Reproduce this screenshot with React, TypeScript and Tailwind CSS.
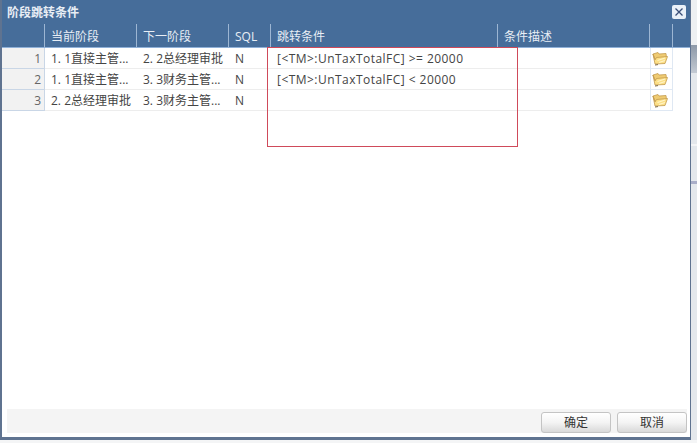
const cols = [
  { label: '当前阶段', w: 'w-[92px]' },
  { label: '下一阶段', w: 'w-[92px]' },
  { label: 'SQL', w: 'w-[42px]' },
  { label: '跳转条件', w: 'w-[227px]' },
  { label: '条件描述', w: 'w-[152px]' },
];

const rows = [
  { no: 1, from: '1. 1直接主管...', to: '2. 2总经理审批', sql: 'N', cond: '[<TM>:UnTaxTotalFC] >= 20000' },
  { no: 2, from: '1. 1直接主管...', to: '3. 3财务主管...', sql: 'N', cond: '[<TM>:UnTaxTotalFC] < 20000' },
  { no: 3, from: '2. 2总经理审批', to: '3. 3财务主管...', sql: 'N', cond: '' },
];

function FolderIcon() {
  return (
    <svg width="16" height="15" viewBox="0 0 16 15" className="block">
      <path d="M1 3 L6 1.5 L7 3 L14 2.5 L14.5 7 L3 8 Z" fill="#efcb72" stroke="#c39a4e" strokeWidth="0.8" />
      <path d="M1 3 L3 13 L13 12.5 L15.5 5.5 L4.5 6.5 L3 9 Z" fill="#fcdf86" stroke="#c39a4e" strokeWidth="0.8" />
      <path d="M5.5 9.5 L13 7 M7 11.5 L13 9.5" stroke="#fff4c8" strokeWidth="1.3" />
      <path d="M3 14 L6 13.6" stroke="#7d6a45" strokeWidth="1" />
    </svg>
  );
}

const btn =
  'h-[21px] w-[70px] rounded-[3px] border border-[#c4c4c4] bg-gradient-to-b from-white via-[#f4f4f4] to-[#d9d9d9] text-[12px] text-[#333]';

export default function App() {
  return (
    <div className="relative flex h-[443px] w-[697px] overflow-hidden bg-[#f4f5f6] font-['Open_Sans','Noto_Sans_CJK_SC',sans-serif] text-[12px] text-[#444]">
      <div className="flex h-[440px] w-[691px] shrink-0 flex-col border-b-[3px] border-l-2 border-r border-[#5f7390] bg-white">
        <div className="flex h-[24px] shrink-0 items-center justify-between bg-[#466d9a] pl-[5px] pr-[4px]">
          <span className="pt-[1px] text-[12px] font-bold text-[#e8eef5]">阶段跳转条件</span>
          <span className="flex h-[14px] w-[14px] items-center justify-center rounded-[2px] bg-[#e9f0f8]">
            <svg width="10" height="10" viewBox="0 0 10 10">
              <path d="M1.5 1.5 L8.5 8.5 M8.5 1.5 L1.5 8.5" stroke="#3a4f78" strokeWidth="1.3" />
            </svg>
          </span>
        </div>
        <div className="flex h-[24px] shrink-0 border-b border-[#8fb0d8] bg-[#466d9a] text-[12px] text-[#e8eef5]">
          <div className="w-[43px] shrink-0 border-r border-[#9db6d3]" />
          {cols.map((c) => (
            <div key={c.label} className={`${c.w} shrink-0 border-r border-[#9db6d3] pl-[6px] leading-[25px]`}>
              {c.label}
            </div>
          ))}
          <div className="w-[23px] shrink-0 border-r border-[#9db6d3]" />
        </div>
        {rows.map((r) => (
          <div key={r.no} className="flex h-[21px] shrink-0 leading-[22px]">
            <div className="w-[43px] shrink-0 border-r border-b border-[#c9d6e6] bg-[#f2f2f2] pr-[3px] text-right text-[#666]">{r.no}</div>
            <div className="w-[92px] shrink-0 truncate border-b border-[#ededed] pl-[6px]">{r.from}</div>
            <div className="w-[92px] shrink-0 truncate border-b border-[#ededed] pl-[6px]">{r.to}</div>
            <div className="w-[42px] shrink-0 border-b border-[#ededed] pl-[6px]">{r.sql}</div>
            <div className="w-[227px] shrink-0 whitespace-nowrap border-b border-[#ededed] pl-[6px] tracking-[0.46px]">{r.cond}</div>
            <div className="w-[152px] shrink-0 border-b border-[#ededed]" />
            <div className="flex w-[23px] shrink-0 items-center justify-start border-x border-b border-[#dfe8f3] pl-[1px]">
              <FolderIcon />
            </div>
          </div>
        ))}
        <div className="flex-1" />
        <div className="mb-[4px] ml-[5px] mr-[3px] flex h-[24px] shrink-0 items-end justify-end gap-[6px] bg-[#f4f4f4]">
          <button type="button" className={btn}>确定</button>
          <button type="button" className={btn}>取消</button>
        </div>
      </div>
      <div className="flex flex-1 flex-col">
        <div className="h-[45px] bg-[#eef0f2]" />
        <div className="h-[28px] bg-gradient-to-b from-[#8d99a8] to-[#c3cad3]" />
        <div className="h-[71px] bg-[#e4e8ec]" />
        <div className="h-[2px] bg-[#f4f5f6]" />
        <div className="h-[35px] bg-[#e4e8ec]" />
        <div className="h-[3px] bg-[#a9aec8]" />
        <div className="h-[256px] bg-[#e4e8ec]" />
        <div className="flex-1 bg-[#f4f5f6]" />
      </div>
      <div className="absolute left-[267px] top-[47px] h-[100px] w-[251px] border border-[#cf4a5a]" />
    </div>
  );
}
